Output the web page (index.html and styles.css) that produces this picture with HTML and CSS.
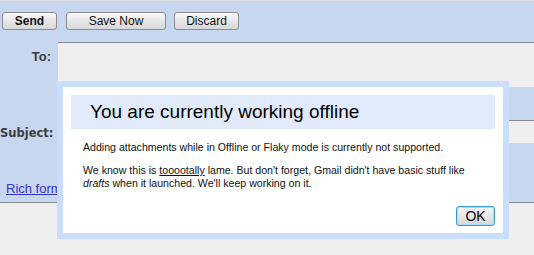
FILE: index.html
```html
<!DOCTYPE html>
<html>
<head>
<meta charset="utf-8">
<link rel="stylesheet" href="styles.css">
</head>
<body>
<div class="page">
  <div class="toolbar">
    <button class="btn btn-send">Send</button>
    <button class="btn btn-save">Save Now</button>
    <button class="btn btn-discard">Discard</button>
  </div>
  <div class="compose">
    <div class="label label-to">To:</div>
    <div class="field field-to"></div>
    <div class="label"></div>
    <div class="gap-row"></div>
    <div class="label label-subject">Subject:</div>
    <div class="field field-subject"></div>
    <div class="links"><a href="#" class="rich">Rich formatting</a></div>
  </div>
  <div class="footer"></div>

  <div class="dialog">
    <div class="dialog-inner">
      <div class="dialog-title">You are currently working offline</div>
      <p class="msg">Adding attachments while in Offline or Flaky mode is currently not supported.</p>
      <p class="msg">We know this is <u>tooootally</u> lame. But don't forget, Gmail didn't have basic stuff like <i>drafts</i> when it launched. We'll keep working on it.</p>
      <div class="actions"><button class="ok">OK</button></div>
    </div>
  </div>
</div>
</body>
</html>
```
FILE: styles.css
```css
html, body {
  margin: 0;
  padding: 0;
  background: #efefef;
  font-family: "Liberation Sans", Arial, sans-serif;
  overflow: hidden;
}
.page {
  position: relative;
  width: 534px;
  height: 255px;
}
.toolbar {
  background: #c6d7ef;
  border-top: 1px solid #dcdcdc;
  height: 42px;
  box-sizing: border-box;
  padding: 11px 0 0 2px;
  display: flex;
  align-items: flex-start;
}
.btn {
  height: 18px;
  box-sizing: border-box;
  border: 1px solid #8e8e8e;
  border-radius: 3px;
  background: linear-gradient(#fbfbfb, #e6e6e6 50%, #d8d8d8);
  font-family: "Liberation Sans", Arial, sans-serif;
  font-size: 12px;
  color: #111;
  padding: 0;
  margin: 0;
  line-height: 15px;
}
.btn-send { width: 55px; font-weight: bold; }
.btn-save { width: 100px; margin-left: 9px; }
.btn-discard { width: 65px; margin-left: 8px; }

.compose {
  display: grid;
  grid-template-columns: 58px 1fr;
  background: #c6d7ef;
}
.label {
  font-family: "DejaVu Sans", Verdana, sans-serif;
  font-weight: bold;
  font-size: 11.5px;
  color: #3c3c3c;
  text-align: right;
  padding-right: 6px;
}
.label-to {
  padding-top: 7px;
  font-family: "Liberation Sans", Arial, sans-serif;
  font-size: 13px;
  padding-right: 7px;
}
.label-subject {
  padding-top: 6px;
}
.field {
  background: #efefef;
  border-top: 1px solid #8a8a8a;
}
.field-to { height: 44px; }
.gap-row { height: 33px; }
.field-subject { height: 22px; }
.links {
  grid-column: 1 / span 2;
  height: 59px;
  box-sizing: border-box;
  padding: 36px 0 0 6px;
}
.rich {
  font-size: 13px;
  color: #3434c8;
  text-decoration: underline;
}
.footer {
  border-top: 1px solid #8a8a8a;
  height: 60px;
}

.dialog {
  position: absolute;
  left: 57px;
  top: 81px;
  width: 452px;
  height: 158px;
  box-sizing: border-box;
  border: 6px solid #c8defc;
  background: #fff;
}
.dialog-inner {
  padding: 8px 8px 7px 8px;
  height: 100%;
  box-sizing: border-box;
  display: flex;
  flex-direction: column;
}
.dialog-title {
  background: #e2ebfc;
  height: 34px;
  padding-left: 19px;
  font-size: 19px;
  line-height: 34px;
  color: #000;
}
.msg {
  margin: 12px 0 0 12px;
  font-size: 10.6px;
  line-height: 13px;
  color: #111;
  width: 400px;
}
.msg + .msg { margin-top: 10px; }
.actions {
  margin-top: auto;
  display: flex;
  justify-content: flex-end;
}
.ok {
  width: 39px;
  height: 20px;
  box-sizing: border-box;
  border: 1px solid #3c9bc8;
  border-radius: 3px;
  box-shadow: inset 0 0 0 1px #a8dcf4;
  background: linear-gradient(#f2f2f2, #e8e8e8 50%, #d6d6d6);
  font-family: "Liberation Sans", Arial, sans-serif;
  font-size: 14px;
  padding: 0;
  line-height: 17px;
  color: #000;
}
```
